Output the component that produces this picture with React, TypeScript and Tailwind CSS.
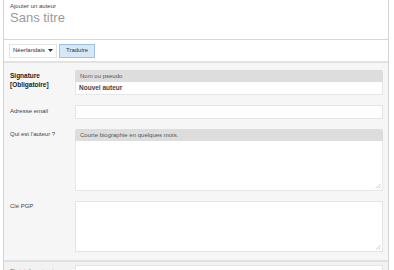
import React from "react";

const font = { fontFamily: '"Liberation Sans", Arial, sans-serif' };

function Label({ children, bold }: { children: React.ReactNode; bold?: boolean }) {
  return (
    <div className={`w-[65px] shrink-0 leading-[9px] ${bold ? "font-bold text-[6.5px] text-[#222]" : "text-[6px] text-[#444]"}`}>
      {children}
    </div>
  );
}

function Grip() {
  return (
    <svg className="absolute right-[1px] bottom-[1px]" width="6" height="6" viewBox="0 0 6 6">
      <path d="M5.5 1 L1 5.5 M5.5 3.5 L3.5 5.5" stroke="#bdbdbd" strokeWidth="0.8" />
    </svg>
  );
}

export default function App() {
  return (
    <div className="w-[394px] h-[270px] overflow-hidden bg-white" style={font}>
      <div className="ml-[3px] w-[386px] h-[270px] border-l border-r border-[#d4d4d4] flex flex-col">
        {/* Title */}
        <div className="h-[40px] shrink-0 border-b border-[#d8d8d8] px-[6px] pt-[2px]">
          <div className="text-[6px] leading-[8px] text-[#444]">Ajouter un auteur</div>
          <div className="text-[13px] leading-[16px] text-[#9a9a9a]">Sans titre</div>
        </div>
        {/* Toolbar */}
        <div className="h-[23px] shrink-0 border-b-2 border-[#e2e2e2] flex items-center gap-[2px] pl-[5px]">
          <div className="w-[48px] h-[14px] border border-[#e4e4e4] bg-white flex items-center justify-between pl-[3px] pr-[3px]">
            <span className="text-[6px] text-[#333]">Néerlandais</span>
            <svg width="5" height="3" viewBox="0 0 5 3"><path d="M0 0 L5 0 L2.5 3 Z" fill="#333" /></svg>
          </div>
          <div className="w-[36px] h-[14px] border border-[#9cc3e3] bg-[#d6e8f7] flex items-center justify-center text-[6px] text-[#333]">
            Traduire
          </div>
        </div>
        {/* Form */}
        <div className="flex-1 bg-[#f6f6f6] flex flex-col">
          <div className="pl-[6px] pr-[5px] pt-[7px] flex flex-col gap-[10px]">
            {/* Signature */}
            <div className="flex">
              <div className="pt-[1px]">
                <Label bold>
                  Signature
                  <br />
                  [Obligatoire]
                </Label>
              </div>
              <div className="flex-1 flex flex-col">
                <div className="h-[12px] bg-[#dddddd] rounded-t-[2px] pl-[5px] flex items-center text-[6px] text-[#555]">
                  Nom ou pseudo
                </div>
                <div className="h-[13px] bg-white border border-[#e6e6e6] border-t-0 pl-[3px] flex items-center text-[6.5px] font-bold text-[#444]">
                  Nouvel auteur
                </div>
              </div>
            </div>
            {/* Email */}
            <div className="flex">
              <div className="pt-[2px]">
                <Label>Adresse email</Label>
              </div>
              <div className="flex-1 h-[14px] bg-white border border-[#e4e4e4]" />
            </div>
            {/* Bio */}
            <div className="flex">
              <div className="pt-[1px]">
                <Label>Qui est l'auteur ?</Label>
              </div>
              <div className="flex-1 flex flex-col">
                <div className="h-[12px] bg-[#dddddd] rounded-t-[2px] pl-[5px] flex items-center text-[6px] text-[#555]">
                  Courte biographie en quelques mots.
                </div>
                <div className="relative h-[50px] bg-white border border-[#e6e6e6] border-t-0">
                  <Grip />
                </div>
              </div>
            </div>
            {/* PGP */}
            <div className="flex">
              <div className="pt-[1px]">
                <Label>Clé PGP</Label>
              </div>
              <div className="relative flex-1 h-[51px] bg-white border border-[#e4e4e4]">
                <Grip />
              </div>
            </div>
          </div>
          <div className="mt-[8px] border-t-2 border-[#e0e0e0] bg-[#f2f2f2] flex-1 pl-[6px] pr-[5px] pt-[3px] flex">
            <div className="pt-[2px]">
              <Label>Statut de cet auteur</Label>
            </div>
            <div className="flex-1 h-[14px] bg-white border border-[#e4e4e4]" />
          </div>
        </div>
      </div>
    </div>
  );
}
